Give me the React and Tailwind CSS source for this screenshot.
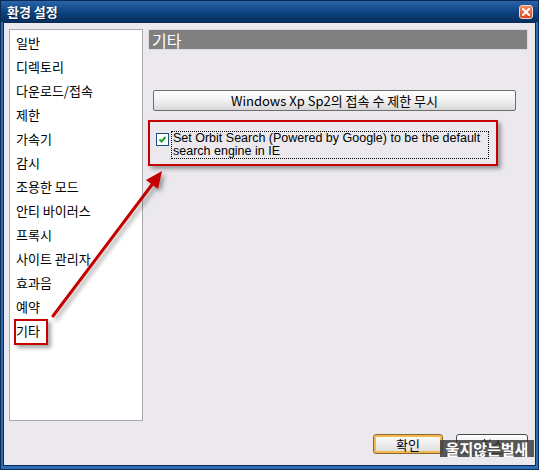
import React from "react";

const items = [
  "일반",
  "디렉토리",
  "다운로드/접속",
  "제한",
  "가속기",
  "감시",
  "조용한 모드",
  "안티 바이러스",
  "프록시",
  "사이트 관리자",
  "효과음",
  "예약",
  "기타",
];

const kr = "font-['Noto_Sans_CJK_KR','Noto_Sans',sans-serif]";

export default function App() {
  return (
    <div
      className={`relative w-[539px] h-[470px] flex flex-col overflow-hidden bg-[#2c6cb4] border border-[#0a2a55] ${kr}`}
    >
      {/* Title bar */}
      <div className="h-[21px] shrink-0 flex items-center justify-between pl-[6px] pr-[5px] bg-gradient-to-b from-[#2a64a8] via-[#0d4585] to-[#06305f]">
        <span className="text-white text-[13px] font-bold leading-none [text-shadow:1px_1px_0_#0a1e3c]">
          환경 설정
        </span>
        <div className="w-[14px] h-[14px] rounded-[3px] border border-[#f0d8d0] bg-gradient-to-b from-[#f08a60] to-[#d8451f] flex items-center justify-center">
          <svg width="8" height="8" viewBox="0 0 8 8">
            <path d="M1 1 L7 7 M7 1 L1 7" stroke="white" strokeWidth="2" strokeLinecap="square" />
          </svg>
        </div>
      </div>

      {/* Client area */}
      <div className="flex-1 mx-[2px] mb-[3px] bg-[#ebe9ed] border border-[#0a2a55] flex flex-col">
        <div className="flex gap-[5px] pt-[6px] pl-[5px]">
          {/* List */}
          <div className="w-[134px] h-[392px] bg-white border border-[#a9a9ad] pl-[6px]">
            {items.map((t) => (
              <div key={t} className="h-[24px] flex items-center text-[13px] text-black leading-none">
                {t}
              </div>
            ))}
          </div>

          {/* Right panel */}
          <div className="w-[380px] flex flex-col">
            <div className="h-[21px] bg-[#808080] border border-[#dcdcdc] flex items-center pl-[3px]">
              <span className="text-white text-[16px] leading-none">기타</span>
            </div>

            <div className="mt-[40px] ml-[5px] w-[363px] h-[21px] rounded-[2px] border border-[#6e6e6e] bg-gradient-to-b from-white via-[#f1f1f1] to-[#d8d8d8] flex items-center justify-center">
              <span className="text-[13px] text-black leading-none">Windows Xp Sp2의 접속 수 제한 무시</span>
            </div>

            <div className="mt-[20px] ml-[8px] flex items-start">
              <div className="mt-[2px] w-[13px] h-[13px] border border-[#1c5180] bg-white flex items-center justify-center shrink-0">
                <svg width="9" height="9" viewBox="0 0 9 9">
                  <path d="M1.5 4.5 L3.5 6.5 L7.5 2" stroke="#21a121" strokeWidth="2" fill="none" />
                </svg>
              </div>
              <div className="ml-[2px] w-[318px] h-[28px] border border-dotted border-black px-[1px] font-['Liberation_Sans',sans-serif] text-[12.5px] leading-[13px] text-black">
                Set Orbit Search (Powered by Google) to be the default
                <br />
                search engine in IE
              </div>
            </div>
          </div>
        </div>

        <div className="flex-1" />

        {/* Bottom buttons */}
        <div className="flex justify-end gap-[13px] pr-[7px] pb-[11px]">
          <div className="w-[70px] h-[20px] rounded-[3px] border border-[#8a6a30] bg-gradient-to-b from-white to-[#dcdcdc] shadow-[inset_0_0_0_2px_#f5b84b] flex items-center justify-center">
            <span className="text-[13px] leading-none text-black">확인</span>
          </div>
          <div className="w-[72px] h-[20px] rounded-[3px] border border-[#4a4a4a] bg-gradient-to-b from-white to-[#dcdcdc] flex items-center justify-center">
            <span className="text-[13px] leading-none text-black">취소</span>
          </div>
        </div>
      </div>

      {/* Annotation overlays */}
      <div className="absolute left-[13px] top-[318px] w-[34px] h-[26px] border-2 border-[#c40000] shadow-[3px_3px_4px_rgba(0,0,0,0.35)]" />
      <div className="absolute left-[147px] top-[119px] w-[350px] h-[46px] border-2 border-[#c40000] shadow-[3px_3px_4px_rgba(0,0,0,0.35)]" />

      <svg className="absolute left-0 top-0" width="539" height="470" viewBox="0 0 539 470">
        <defs>
          <filter id="sh" x="-20%" y="-20%" width="140%" height="140%">
            <feDropShadow dx="3" dy="3" stdDeviation="2" floodColor="#000" floodOpacity="0.35" />
          </filter>
        </defs>
        <g filter="url(#sh)">
          <line x1="52" y1="315" x2="153" y2="181" stroke="#c40000" strokeWidth="3" strokeLinecap="round" />
          <polygon points="161,170 157,188 145,179" fill="#c40000" />
        </g>
      </svg>

      {/* Watermark */}
      <div className="absolute left-[439px] top-[439px] w-[94px] h-[17px] bg-[rgba(55,55,55,0.82)] flex items-center justify-center">
        <span className="text-white text-[15px] font-bold leading-none whitespace-nowrap">울지않는벌새</span>
      </div>
    </div>
  );
}
